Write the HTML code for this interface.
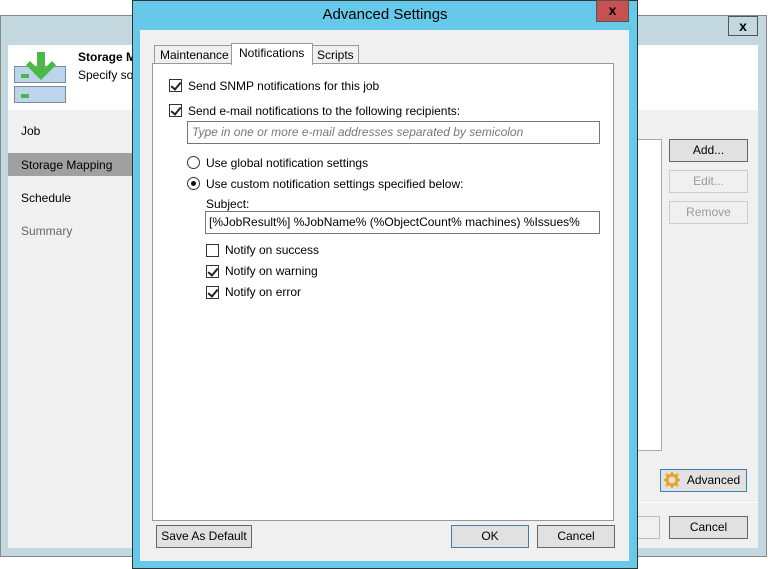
<!DOCTYPE html>
<html><head><style>
*{box-sizing:border-box;margin:0;padding:0}
body{width:768px;height:569px;background:#fff;position:relative;overflow:hidden;font-family:"Liberation Sans","DejaVu Sans",sans-serif;font-size:12px;color:#000}
.a{position:absolute}
.btn{position:absolute;background:#e1e1e1;border:1px solid #adadad;text-align:center;line-height:20px;font-size:12px}
.cb{position:absolute;width:13px;height:13px;border:1px solid #333;background:#fff}
.cb.on::after{content:"";position:absolute;left:3px;top:0px;width:4px;height:8px;border:solid #222;border-width:0 2px 2px 0;transform:rotate(40deg)}
.rb{position:absolute;width:13px;height:13px;border:1px solid #333;border-radius:50%;background:#fff}
.rb.on::after{content:"";position:absolute;left:3px;top:3px;width:5px;height:5px;border-radius:50%;background:#111}
.t{position:absolute;white-space:nowrap}
</style></head><body>
<div class="a" style="left:0;top:15px;width:767px;height:542px;background:#c3d7de;border:1px solid #888"></div>
<div class="a" style="left:728px;top:16px;width:30px;height:20px;border:1px solid #555;background:#c3d7de;text-align:center;font-weight:bold;font-size:14px;line-height:18px">x</div>
<div class="a" style="left:8px;top:45px;width:750px;height:503px;background:#f0f0f0"></div>
<div class="a" style="left:8px;top:45px;width:750px;height:65px;background:#fff"></div>
<div class="a" style="left:14px;top:66px;width:52px;height:17px;background:#bcd4ec;border:1px solid #7a8a99"></div>
<div class="a" style="left:14px;top:86px;width:52px;height:17px;background:#bcd4ec;border:1px solid #7a8a99"></div>
<div class="a" style="left:21px;top:74px;width:8px;height:4px;background:#4cb848"></div>
<div class="a" style="left:21px;top:94px;width:8px;height:4px;background:#4cb848"></div>
<svg class="a" style="left:24px;top:50px" width="34" height="32"><path d="M13 2h8v16l7-7 4 4-15 15L2 15l4-4 7 7z" fill="#4cb848"/></svg>
<div class="t" style="left:78px;top:50px;font-weight:bold">Storage M</div>
<div class="t" style="left:78px;top:68px">Specify so</div>
<div class="t" style="left:21px;top:124px">Job</div>
<div class="a" style="left:8px;top:153px;width:125px;height:23px;background:#a0a0a0"></div>
<div class="t" style="left:21px;top:158px">Storage Mapping</div>
<div class="t" style="left:21px;top:191px">Schedule</div>
<div class="t" style="left:21px;top:224px;color:#666">Summary</div>
<div class="a" style="left:620px;top:139px;width:42px;height:312px;background:#fff;border:1px solid #aaa"></div>
<div class="btn" style="left:669px;top:139px;width:79px;height:23px;border-color:#666">Add...</div>
<div class="btn" style="left:669px;top:170px;width:79px;height:23px;background:#f0f0f0;border-color:#ccc;color:#999">Edit...</div>
<div class="btn" style="left:669px;top:201px;width:79px;height:23px;background:#f0f0f0;border-color:#ccc;color:#999">Remove</div>
<div class="btn" style="left:660px;top:469px;width:87px;height:23px;border-color:#3c7fb1;padding-left:20px">Advanced</div>
<svg class="a" style="left:663px;top:471px" width="18" height="18"><circle cx="9" cy="9" r="5" fill="none" stroke="#e8a420" stroke-width="3"/><g stroke="#e8a420" stroke-width="2"><path d="M9 1v3M9 14v3M1 9h3M14 9h3M3 3l2 2M13 13l2 2M3 15l2-2M13 5l2-2"/></g></svg>
<div class="a" style="left:630px;top:502px;width:128px;height:1px;background:#fff"></div>
<div class="btn" style="left:600px;top:516px;width:60px;height:23px;background:#f0f0f0;border-color:#bbb"></div>
<div class="btn" style="left:669px;top:516px;width:79px;height:23px;border-color:#666">Cancel</div>

<div class="a" style="left:132px;top:0;width:506px;height:569px;background:#66c9e9;border:1px solid #333"></div>
<div class="t" style="left:132px;width:506px;top:6px;text-align:center;font-size:15px">Advanced Settings</div>
<div class="a" style="left:596px;top:0;width:33px;height:22px;background:#c75050;border:1px solid #555;text-align:center;font-weight:bold;font-size:14px;line-height:18px">x</div>
<div class="a" style="left:140px;top:30px;width:489px;height:531px;background:#f0f0f0"></div>
<div class="a" style="left:152px;top:63px;width:462px;height:458px;background:#fff;border:1px solid #999"></div>
<div class="a" style="left:154px;top:45px;width:78px;height:19px;background:#f0f0f0;border:1px solid #999"></div>
<div class="t" style="left:160px;top:48px">Maintenance</div>
<div class="a" style="left:312px;top:45px;width:47px;height:19px;background:#f0f0f0;border:1px solid #999"></div>
<div class="t" style="left:317px;top:48px">Scripts</div>
<div class="a" style="left:231px;top:43px;width:82px;height:22px;background:#fff;border:1px solid #999;border-bottom:none"></div>
<div class="t" style="left:239px;top:46px">Notifications</div>

<div class="cb on" style="left:169px;top:79px"></div>
<div class="t" style="left:188px;top:79px">Send SNMP notifications for this job</div>
<div class="cb on" style="left:169px;top:104px"></div>
<div class="t" style="left:188px;top:104px">Send e-mail notifications to the following recipients:</div>
<div class="a" style="left:187px;top:121px;width:413px;height:23px;border:1px solid #777;background:#fff"></div>
<div class="t" style="left:192px;top:125px;font-style:italic;color:#777">Type in one or more e-mail addresses separated by semicolon</div>
<div class="rb" style="left:187px;top:156px"></div>
<div class="t" style="left:206px;top:156px">Use global notification settings</div>
<div class="rb on" style="left:187px;top:177px"></div>
<div class="t" style="left:206px;top:177px">Use custom notification settings specified below:</div>
<div class="t" style="left:206px;top:197px">Subject:</div>
<div class="a" style="left:205px;top:211px;width:395px;height:23px;border:1px solid #777;background:#fff"></div>
<div class="t" style="left:209px;top:215px">[%JobResult%] %JobName% (%ObjectCount% machines) %Issues%</div>
<div class="cb" style="left:206px;top:244px"></div>
<div class="t" style="left:225px;top:243px">Notify on success</div>
<div class="cb on" style="left:206px;top:265px"></div>
<div class="t" style="left:225px;top:264px">Notify on warning</div>
<div class="cb on" style="left:206px;top:286px"></div>
<div class="t" style="left:225px;top:285px">Notify on error</div>

<div class="btn" style="left:156px;top:525px;width:96px;height:23px;border-color:#666">Save As Default</div>
<div class="btn" style="left:451px;top:525px;width:78px;height:23px;border-color:#3c7fb1">OK</div>
<div class="btn" style="left:537px;top:525px;width:78px;height:23px;border-color:#666">Cancel</div>
</body></html>
